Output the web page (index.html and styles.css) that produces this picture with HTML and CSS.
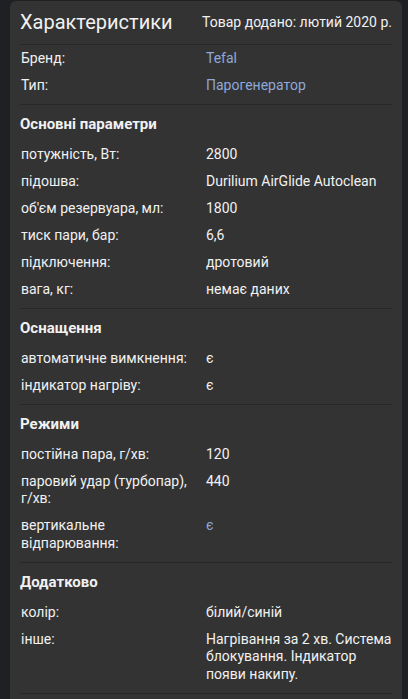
FILE: index.html
```html
<!DOCTYPE html>
<html lang="uk">
<head>
<meta charset="utf-8">
<link rel="stylesheet" href="styles.css">
</head>
<body>
<div class="card">
  <div class="head">
    <h1 class="title">Характеристики</h1>
    <span class="added">Товар додано: лютий 2020 р.</span>
  </div>
  <section class="sec sec-first">
    <div class="row"><span class="k">Бренд:</span><a class="v link">Tefal</a></div>
    <div class="row"><span class="k">Тип:</span><a class="v link">Парогенератор</a></div>
  </section>
  <section class="sec">
    <h2 class="sh">Основні параметри</h2>
    <div class="row"><span class="k">потужність, Вт:</span><span class="v">2800</span></div>
    <div class="row"><span class="k">підошва:</span><span class="v">Durilium AirGlide Autoclean</span></div>
    <div class="row"><span class="k">об'єм резервуара, мл:</span><span class="v">1800</span></div>
    <div class="row"><span class="k">тиск пари, бар:</span><span class="v">6,6</span></div>
    <div class="row"><span class="k">підключення:</span><span class="v">дротовий</span></div>
    <div class="row"><span class="k">вага, кг:</span><span class="v">немає даних</span></div>
  </section>
  <section class="sec">
    <h2 class="sh">Оснащення</h2>
    <div class="row"><span class="k">автоматичне вимкнення:</span><span class="v">є</span></div>
    <div class="row"><span class="k">індикатор нагріву:</span><span class="v">є</span></div>
  </section>
  <section class="sec">
    <h2 class="sh">Режими</h2>
    <div class="row"><span class="k">постійна пара, г/хв:</span><span class="v">120</span></div>
    <div class="row"><span class="k">паровий удар (турбопар), г/хв:</span><span class="v">440</span></div>
    <div class="row"><span class="k">вертикальне відпарювання:</span><a class="v link">є</a></div>
  </section>
  <section class="sec">
    <h2 class="sh">Додатково</h2>
    <div class="row"><span class="k">колір:</span><span class="v">білий/синій</span></div>
    <div class="row"><span class="k">інше:</span><span class="v">Нагрівання за 2 хв. Система блокування. Індикатор появи накипу.</span></div>
  </section>
</div>
</body>
</html>
```
FILE: styles.css
```css
html, body {
  margin: 0;
  padding: 0;
  background: #1f2023;
}
body {
  padding: 1px 6px 0 10px;
  font-family: Roboto, "Noto Sans", sans-serif;
  color: #f1f1f1;
}
.card {
  background: #333333;
  border-radius: 6px;
  padding: 0 10px 40px;
}
.head {
  display: flex;
  justify-content: space-between;
  align-items: center;
  padding: 9px 0 10px;
  border-bottom: 1px solid #282828;
}
.title {
  margin: 0;
  font-size: 20px;
  font-weight: 400;
  line-height: 24px;
}
.added {
  font-size: 14px;
  line-height: 20px;
  margin-top: -1px;
}
.sec {
  padding: 0 0 5px;
  border-bottom: 1px solid #282828;
}
.sh {
  margin: 0;
  padding: 8.5px 0 7.5px;
  font-size: 15px;
  font-weight: 700;
  line-height: 20px;
}
.row {
  display: grid;
  grid-template-columns: 176px 1fr;
  column-gap: 10px;
  padding: 4.75px 0;
  font-size: 14px;
  line-height: 17.5px;
}
.k {
  padding-left: 1px;
}
.link {
  color: #8ea8d8;
}
```
